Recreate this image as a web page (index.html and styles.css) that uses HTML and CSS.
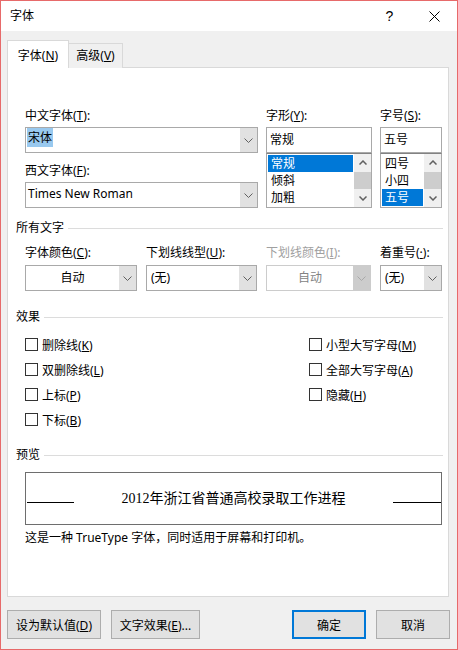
FILE: index.html
```html
<!DOCTYPE html>
<html lang="zh-CN">
<head>
    <meta charset="UTF-8">
    <title>字体</title>
    <link rel="stylesheet" href="styles.css">
</head>
<body>
    <div class="window">
        <!-- Title bar -->
        <div class="titlebar">
            <span class="title">字体</span>
            <span class="title-btn">?</span>
            <span class="title-btn">
                <svg width="11" height="11" viewBox="0 0 11 11"><path d="M0.5 0.5 L10.5 10.5 M10.5 0.5 L0.5 10.5" stroke="#000" stroke-width="1" fill="none"/></svg>
            </span>
        </div>

        <div class="client">
            <!-- Tabs -->
            <div class="tabs">
                <div class="tab active">字体(<u>N</u>)</div>
                <div class="tab">高级(<u>V</u>)</div>
            </div>

            <div class="panel">
                <!-- Font name / style / size -->
                <div class="font-row">
                    <div class="col col-name">
                        <div class="label">中文字体(<u>T</u>):</div>
                        <div class="combo combo-edit">
                            <span class="value"><span class="sel">宋体</span></span>
                            <span class="drop"><svg width="9" height="5" viewBox="0 0 9 5"><path d="M0.5 0.5 L4.5 4.5 L8.5 0.5" stroke="#606060" fill="none"/></svg></span>
                        </div>
                        <div class="label label-gap">西文字体(<u>F</u>):</div>
                        <div class="combo combo-edit">
                            <span class="value plain">Times New Roman</span>
                            <span class="drop"><svg width="9" height="5" viewBox="0 0 9 5"><path d="M0.5 0.5 L4.5 4.5 L8.5 0.5" stroke="#606060" fill="none"/></svg></span>
                        </div>
                    </div>

                    <div class="col col-style">
                        <div class="label">字形(<u>Y</u>):</div>
                        <div class="textbox">常规</div>
                        <div class="listbox">
                            <div class="items">
                                <div class="item selected">常规</div>
                                <div class="item">倾斜</div>
                                <div class="item">加粗</div>
                            </div>
                            <div class="scrollbar">
                                <div class="sb-btn"><svg width="8" height="5" viewBox="0 0 8 5"><path d="M0.5 4.5 L4 1 L7.5 4.5" stroke="#606060" stroke-width="1.5" fill="none"/></svg></div>
                                <div class="sb-thumb"></div>
                                <div class="sb-track"></div>
                                <div class="sb-btn"><svg width="8" height="5" viewBox="0 0 8 5"><path d="M0.5 0.5 L4 4 L7.5 0.5" stroke="#606060" stroke-width="1.5" fill="none"/></svg></div>
                            </div>
                        </div>
                    </div>

                    <div class="col col-size">
                        <div class="label">字号(<u>S</u>):</div>
                        <div class="textbox">五号</div>
                        <div class="listbox">
                            <div class="items">
                                <div class="item">四号</div>
                                <div class="item">小四</div>
                                <div class="item selected">五号</div>
                            </div>
                            <div class="scrollbar">
                                <div class="sb-btn"><svg width="8" height="5" viewBox="0 0 8 5"><path d="M0.5 4.5 L4 1 L7.5 4.5" stroke="#606060" stroke-width="1.5" fill="none"/></svg></div>
                                <div class="sb-thumb"></div>
                                <div class="sb-track"></div>
                                <div class="sb-btn"><svg width="8" height="5" viewBox="0 0 8 5"><path d="M0.5 0.5 L4 4 L7.5 0.5" stroke="#606060" stroke-width="1.5" fill="none"/></svg></div>
                            </div>
                        </div>
                    </div>
                </div>

                <!-- All text -->
                <div class="section section-all">
                    <span>所有文字</span>
                    <span class="rule"></span>
                </div>
                <div class="attr-row">
                    <div class="col w-color">
                        <div class="label">字体颜色(<u>C</u>):</div>
                        <div class="combo center">
                            <span class="value">自动</span>
                            <span class="drop"><svg width="9" height="5" viewBox="0 0 9 5"><path d="M0.5 0.5 L4.5 4.5 L8.5 0.5" stroke="#606060" fill="none"/></svg></span>
                        </div>
                    </div>
                    <div class="col w-uline">
                        <div class="label">下划线线型(<u>U</u>):</div>
                        <div class="combo">
                            <span class="value">(无)</span>
                            <span class="drop"><svg width="9" height="5" viewBox="0 0 9 5"><path d="M0.5 0.5 L4.5 4.5 L8.5 0.5" stroke="#606060" fill="none"/></svg></span>
                        </div>
                    </div>
                    <div class="col w-ucolor">
                        <div class="label disabled">下划线颜色(<u>I</u>):</div>
                        <div class="combo center combo-disabled">
                            <span class="value">自动</span>
                            <span class="drop"><svg width="9" height="5" viewBox="0 0 9 5"><path d="M0.5 0.5 L4.5 4.5 L8.5 0.5" stroke="#a8a8a8" fill="none"/></svg></span>
                        </div>
                    </div>
                    <div class="col w-emph">
                        <div class="label">着重号(<u>·</u>):</div>
                        <div class="combo">
                            <span class="value">(无)</span>
                            <span class="drop"><svg width="9" height="5" viewBox="0 0 9 5"><path d="M0.5 0.5 L4.5 4.5 L8.5 0.5" stroke="#606060" fill="none"/></svg></span>
                        </div>
                    </div>
                </div>

                <!-- Effects -->
                <div class="section section-fx">
                    <span>效果</span>
                    <span class="rule"></span>
                </div>
                <div class="effects">
                    <div class="fx-col fx-left">
                        <label class="check"><span class="box"></span><span>删除线(<u>K</u>)</span></label>
                        <label class="check"><span class="box"></span><span>双删除线(<u>L</u>)</span></label>
                        <label class="check"><span class="box"></span><span>上标(<u>P</u>)</span></label>
                        <label class="check"><span class="box"></span><span>下标(<u>B</u>)</span></label>
                    </div>
                    <div class="fx-col">
                        <label class="check"><span class="box"></span><span>小型大写字母(<u>M</u>)</span></label>
                        <label class="check"><span class="box"></span><span>全部大写字母(<u>A</u>)</span></label>
                        <label class="check"><span class="box"></span><span>隐藏(<u>H</u>)</span></label>
                    </div>
                </div>

                <!-- Preview -->
                <div class="section section-preview">
                    <span>预览</span>
                    <span class="rule"></span>
                </div>
                <div class="preview">
                    <span class="baseline left"></span>
                    <span class="sample">2012年浙江省普通高校录取工作进程</span>
                    <span class="baseline right"></span>
                </div>
                <p class="note">这是一种 TrueType 字体，同时适用于屏幕和打印机。</p>
            </div>

            <!-- Buttons -->
            <div class="footer">
                <button class="btn w-default">设为默认值(<u>D</u>)</button>
                <button class="btn w-effects">文字效果(<u>E</u>)...</button>
                <span class="spacer"></span>
                <button class="btn w-ok primary">确定</button>
                <button class="btn w-ok">取消</button>
            </div>
        </div>
    </div>
</body>
</html>
```

FILE: styles.css
```css
body {
    margin: 0;
    font-family: "Noto Sans", "Noto Sans CJK SC", sans-serif;
    font-size: 12px;
    color: #000;
}
* { box-sizing: border-box; }
u { text-decoration: underline; text-underline-offset: 1px; }

.window {
    width: 458px;
    height: 650px;
    border: 1px solid #e76a6a;
    background-color: #f0f0f0;
    display: flex;
    flex-direction: column;
}

/* title bar */
.titlebar {
    height: 30px;
    background-color: #fff;
    display: flex;
    align-items: center;
    padding-left: 9px;
}
.title { flex: 1; line-height: 16px; }
.title-btn {
    width: 45px;
    height: 30px;
    display: flex;
    align-items: center;
    justify-content: center;
    font-family: "Liberation Sans", sans-serif;
    font-size: 14px;
}

/* client */
.client {
    flex: 1;
    padding: 9px 7px 0 6px;
    display: flex;
    flex-direction: column;
}
.tabs {
    display: flex;
    align-items: flex-end;
    height: 28px;
    margin-bottom: -1px;
    position: relative;
    z-index: 1;
}
.tab {
    height: 25px;
    line-height: 24px;
    width: 54px;
    text-align: center;
    border: 1px solid #d9d9d9;
    border-bottom: none;
    border-left: none;
    background-color: #f0f0f0;
}
.tab.active {
    height: 28px;
    line-height: 29px;
    width: 62px;
    border-left: 1px solid #d9d9d9;
    background-color: #fff;
}

.panel {
    width: 442px;
    height: 530px;
    background-color: #fff;
    border: 1px solid #d9d9d9;
    padding: 40px 5px 0 8px;
}

.label { line-height: 16px; height: 16px; white-space: nowrap; }
.label.disabled { color: #a0a0a0; }
.label-gap { margin-top: 10px; }

/* font name / style / size */
.font-row {
    display: flex;
    gap: 8px;
    padding-left: 9px;
}
.col-name { width: 233px; }
.col-style { width: 106px; }
.col-size { width: 62px; }

.combo {
    margin-top: 3px;
    height: 26px;
    border: 1px solid #a9a9a9;
    display: flex;
    background-color: #fff;
}
.combo .value {
    flex: 1;
    line-height: 24px;
    padding-left: 4px;
    white-space: nowrap;
    overflow: hidden;
}
.combo-edit .value { line-height: 19px; padding-left: 1px; }
.combo-edit .value.plain { padding-left: 2px; line-height: 22px; }
.sel { background-color: #99c9ef; display: inline-block; padding: 0 1px; line-height: 19px; }
.combo .drop {
    width: 17px;
    background-color: #e1e1e1;
    display: flex;
    align-items: center;
    justify-content: center;
}
.combo.center .value { text-align: center; padding-left: 0; }
.combo-disabled { border-color: #cccccc; }
.combo-disabled .value { color: #838383; }
.combo-disabled .drop { background-color: #cccccc; }

.textbox {
    margin-top: 3px;
    height: 26px;
    border: 1px solid #a9a9a9;
    line-height: 24px;
    padding-left: 3px;
}
.listbox {
    height: 55px;
    border: 1px solid #a9a9a9;
    border-top-color: #828282;
    display: flex;
}
.items { flex: 1; padding: 1px; }
.item { height: 17px; line-height: 17px; padding-left: 3px; }
.item.selected { background-color: #0078d7; color: #fff; }
.scrollbar {
    width: 17px;
    background-color: #f0f0f0;
    display: flex;
    flex-direction: column;
}
.sb-btn {
    height: 17px;
    display: flex;
    align-items: center;
    justify-content: center;
}
.sb-thumb { height: 17px; margin-top: 1px; background-color: #cdcdcd; }
.sb-track { flex: 1; }

/* section headings */
.section {
    display: flex;
    align-items: center;
    height: 16px;
    line-height: 16px;
}
.section .rule {
    flex: 1;
    height: 1px;
    background-color: #dcdcdc;
    margin-left: 4px;
}
.section-all { margin-top: 12px; }
.section-fx { margin-top: 18px; }
.section-preview { margin-top: 15px; }

.attr-row {
    display: flex;
    gap: 9px;
    padding-left: 9px;
    margin-top: 9px;
}
.attr-row .combo { margin-top: 4px; }
.w-color { width: 112px; }
.w-uline { width: 111px; }
.w-ucolor { width: 105px; }
.w-emph { width: 62px; }

/* effects */
.effects {
    display: flex;
    padding-left: 9px;
    margin-top: 7px;
}
.fx-left { width: 284px; }
.check {
    height: 25px;
    display: flex;
    align-items: center;
    gap: 4px;
    white-space: nowrap;
}
.box {
    width: 13px;
    height: 13px;
    border: 1px solid #333;
    background-color: #fff;
}

/* preview */
.preview {
    margin: 9px 0 0 9px;
    width: 417px;
    height: 53px;
    border: 1px solid #6e6e6e;
    display: flex;
}
.baseline {
    height: 1px;
    background-color: #000;
    margin-top: 29px;
}
.baseline.left { width: 47px; margin-left: 1px; }
.baseline.right { width: 48px; }
.sample {
    flex: 1;
    text-align: center;
    align-self: center;
    font-family: "Liberation Serif", "Noto Sans CJK SC", serif;
    font-size: 14px;
    line-height: 18px;
}
.note {
    margin: 5px 0 0 9px;
    line-height: 16px;
}

/* footer buttons */
.footer {
    display: flex;
    gap: 10px;
    margin-top: 13px;
}
.spacer { flex: 1; }
.btn {
    height: 29px;
    border: 1px solid #adadad;
    background-color: #e1e1e1;
    font-family: inherit;
    font-size: 12px;
    padding: 0;
    color: #000;
}
.btn.primary { border: 2px solid #0078d7; }
.w-default { width: 94px; }
.w-effects { width: 89px; }
.w-ok { width: 74px; }
```
